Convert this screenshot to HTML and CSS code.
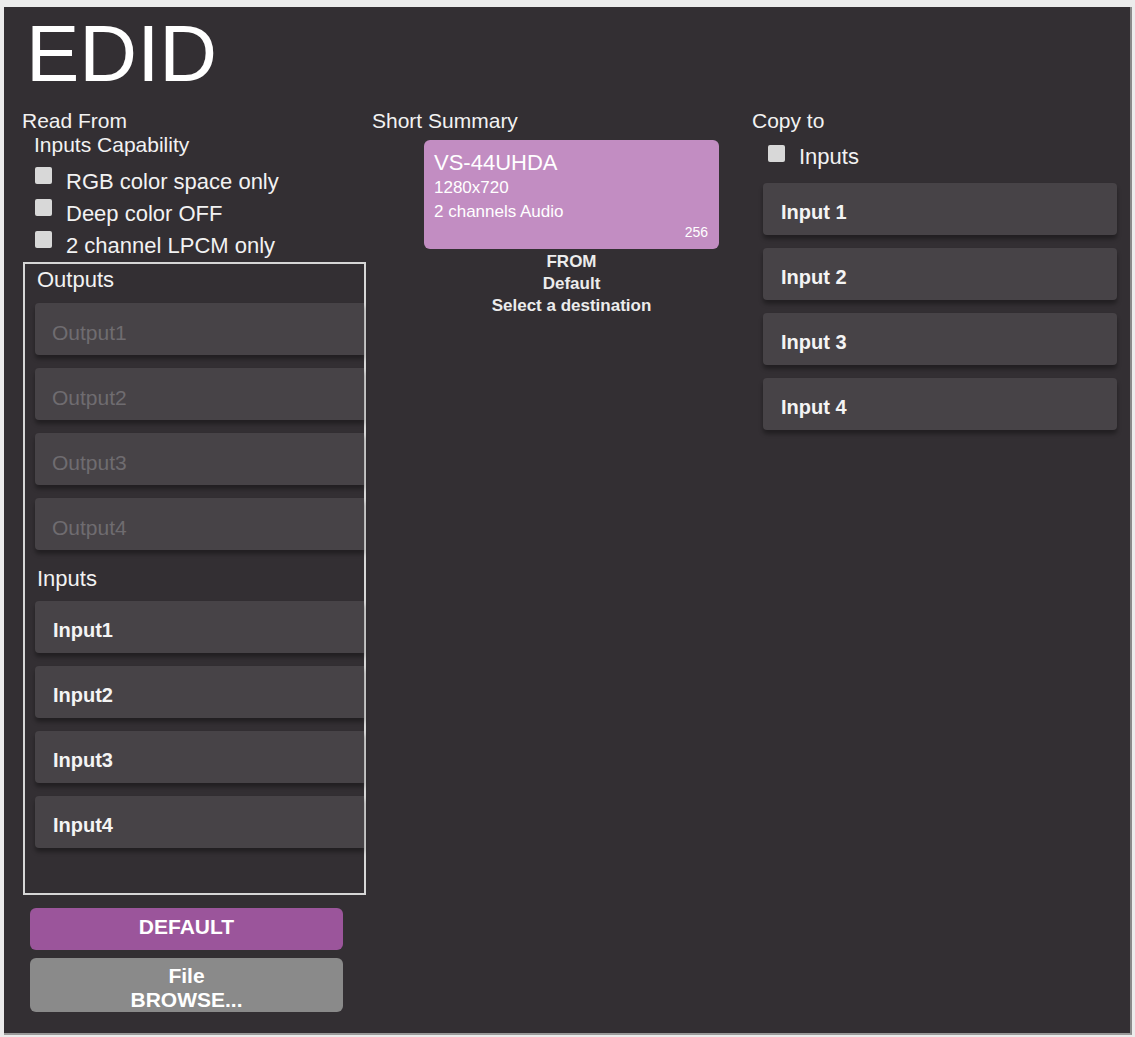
FILE: index.html
```html
<!DOCTYPE html>
<html lang="en">
<head>
    <meta charset="UTF-8">
    <meta name="viewport" content="width=device-width, initial-scale=1.0">
    <title>EDID</title>
    <link rel="stylesheet" href="styles.css">
</head>
<body>
    <div class="panel">
        <h1 class="title">EDID</h1>

        <div class="columns">
            <!-- Read From -->
            <div class="col">
                <div class="label">Read From</div>
                <div class="label sub">Inputs Capability</div>
                <div class="checks">
                    <div class="check-row"><span class="box"></span><span>RGB color space only</span></div>
                    <div class="check-row"><span class="box"></span><span>Deep color OFF</span></div>
                    <div class="check-row"><span class="box"></span><span>2 channel LPCM only</span></div>
                </div>

                <div class="source-box">
                    <div class="group-title">Outputs</div>
                    <div class="btn-list">
                        <div class="port-btn disabled">Output1</div>
                        <div class="port-btn disabled">Output2</div>
                        <div class="port-btn disabled">Output3</div>
                        <div class="port-btn disabled">Output4</div>
                    </div>
                    <div class="group-title inputs-title">Inputs</div>
                    <div class="btn-list inputs-list">
                        <div class="port-btn">Input1</div>
                        <div class="port-btn">Input2</div>
                        <div class="port-btn">Input3</div>
                        <div class="port-btn">Input4</div>
                    </div>
                </div>

                <div class="action default-btn">DEFAULT</div>
                <div class="action browse-btn">File<br>BROWSE...</div>
            </div>

            <!-- Short Summary -->
            <div class="col">
                <div class="label">Short Summary</div>
                <div class="summary-card">
                    <div class="card-name">VS-44UHDA</div>
                    <div class="card-line">1280x720</div>
                    <div class="card-line">2 channels Audio</div>
                    <div class="card-size">256</div>
                </div>
                <div class="summary-from">
                    FROM<br>Default<br>Select a destination
                </div>
            </div>

            <!-- Copy to -->
            <div class="col">
                <div class="label">Copy to</div>
                <div class="check-row copy-check"><span class="box"></span><span>Inputs</span></div>
                <div class="btn-list copy-list">
                    <div class="port-btn">Input 1</div>
                    <div class="port-btn">Input 2</div>
                    <div class="port-btn">Input 3</div>
                    <div class="port-btn">Input 4</div>
                </div>
            </div>
        </div>
    </div>
</body>
</html>
```

FILE: styles.css
```css
body {
    margin: 0;
    background-color: #ececec;
    font-family: "Liberation Sans", Arial, sans-serif;
    color: #f2f2f2;
}

.panel {
    margin: 7px 0 0 4px;
    width: 1128px;
    height: 1028px;
    box-sizing: border-box;
    padding: 7px 13px 0 18px;
    background-color: #332f33;
    border-right: 2px solid #8a8a8a;
    border-bottom: 2px solid #9a9a9a;
}

.title {
    margin: 0 0 15px 4px;
    font-size: 80px;
    line-height: 80px;
    font-weight: normal;
    color: #ffffff;
}

.columns {
    display: grid;
    grid-template-columns: 350px 380px 1fr;
}

.label {
    font-size: 21px;
    line-height: 24px;
}

.label.sub {
    margin-left: 12px;
}

/* Checkboxes */
.checks {
    margin-top: 9px;
}

.check-row {
    display: flex;
    align-items: flex-start;
    height: 32px;
    font-size: 22px;
    line-height: 32px;
}

.box {
    width: 17px;
    height: 17px;
    margin: 1px 14px 0 13px;
    background-color: #d8d8d8;
    border-radius: 2px;
    flex-shrink: 0;
}

/* Outputs / Inputs frame */
.source-box {
    margin-left: 1px;
    width: 343px;
    box-sizing: border-box;
    border: 2px solid #d6d6d6;
    padding: 3px 0 45px 0;
}

.group-title {
    padding-left: 12px;
    font-size: 22px;
    line-height: 26px;
}

.btn-list {
    display: flex;
    flex-direction: column;
    gap: 13px;
    margin: 10px 0 0 10px;
}

.inputs-title {
    margin-top: 16px;
}

.inputs-list {
    margin-top: 9px;
}

.port-btn {
    height: 52px;
    box-sizing: border-box;
    padding: 6px 0 0 18px;
    background-color: #474347;
    border-radius: 4px 0 0 4px;
    box-shadow: 0 4px 4px rgba(0, 0, 0, 0.35);
    font-size: 20px;
    font-weight: bold;
    line-height: 46px;
    color: #f4f4f4;
}

.port-btn.disabled {
    padding: 10px 0 0 17px;
    line-height: 40px;
    font-size: 21px;
    font-weight: normal;
    color: #6f6c70;
}

/* Bottom actions */
.action {
    margin-left: 8px;
    width: 313px;
    border-radius: 6px;
    text-align: center;
    font-weight: bold;
    color: #ffffff;
}

.default-btn {
    margin-top: 13px;
    height: 42px;
    line-height: 38px;
    font-size: 21px;
    background-color: #9b559b;
}

.browse-btn {
    margin-top: 8px;
    height: 54px;
    box-sizing: border-box;
    padding-top: 6px;
    line-height: 24px;
    font-size: 21px;
    background-color: #8a8a8a;
}

/* Summary card */
.summary-card {
    margin: 7px 0 0 52px;
    width: 295px;
    height: 109px;
    box-sizing: border-box;
    padding: 10px 11px 0 10px;
    background-color: #c28dc2;
    border-radius: 6px;
    color: #ffffff;
}

.card-name {
    font-size: 22px;
    line-height: 26px;
}

.card-line {
    font-size: 17px;
    line-height: 24px;
}

.card-size {
    text-align: right;
    font-size: 14px;
    line-height: 16px;
}

.summary-from {
    margin: 2px 0 0 52px;
    width: 295px;
    text-align: center;
    font-size: 17px;
    font-weight: bold;
    line-height: 22px;
    color: #ececec;
}

/* Copy to */
.copy-check {
    margin-top: 11px;
    height: 26px;
    line-height: 26px;
}

.copy-check .box {
    margin: 1px 14px 0 16px;
}

.copy-list {
    margin: 13px 0 0 11px;
}

.copy-list .port-btn {
    border-radius: 4px;
}
```
